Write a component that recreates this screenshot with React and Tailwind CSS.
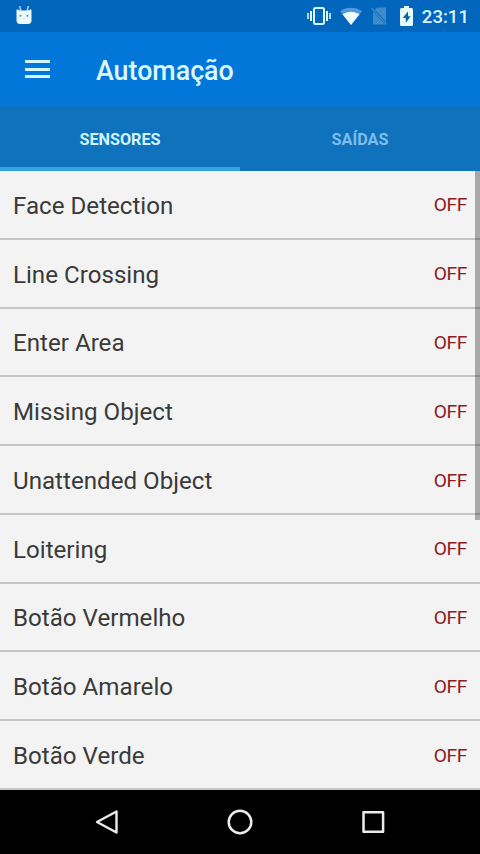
import React, { useState } from 'react';

const sensors = [
    'Face Detection',
    'Line Crossing',
    'Enter Area',
    'Missing Object',
    'Unattended Object',
    'Loitering',
    'Botão Vermelho',
    'Botão Amarelo',
    'Botão Verde',
];

const StatusBar = () => (
    <div className="flex h-8 shrink-0 items-center justify-between bg-[#0366bd] pl-4 pr-[11px]">
        {/* Notificação */}
        <svg className="h-5 w-4" viewBox="0 0 16 20" fill="none">
            <path d="M3.6 0 5 5M12.4 0 11 5" stroke="#b5e4fb" strokeWidth="1.3" />
            <path d="M1 3.8 4 5h8l3-1.2V15a2.5 2.5 0 0 1-2.5 2.5h-9A2.5 2.5 0 0 1 1 15z" fill="#eefcff" stroke="#eefcff" strokeWidth="1" strokeLinejoin="round" />
            <circle cx="4.4" cy="9.7" r="1" fill="#6c8792" />
            <circle cx="11.4" cy="9.7" r="1" fill="#6c8792" />
            <path d="M7 12h2l-1 1z" fill="#a3b9bf" />
        </svg>

        <div className="flex items-center">
            <svg className="h-5 w-6" viewBox="0 0 24 20" fill="none" stroke="#d9f7ff">
                <rect x="7" y="2" width="10" height="16" rx="1.5" strokeWidth="2" />
                <path d="M4 5v10M20 5v10" strokeWidth="2" />
                <path d="M1 7v6M23 7v6" strokeWidth="1.6" />
            </svg>
            <svg className="ml-[9px] h-5 w-[22px]" viewBox="0 0 22 20">
                <path d="M11 19 0 5.2C6.5.6 15.5.6 22 5.2z" fill="#4f9bd9" />
                <path d="M11 19 2.5 8.3c5.5-3.4 11.5-3.4 17 0z" fill="#f0fdff" />
            </svg>
            <svg className="ml-[9px] h-5 w-4" viewBox="0 0 16 20" fill="none">
                <path d="M6 1.5h8a1 1 0 0 1 1 1v13.2L4 3.7zM2 5.5l12 13H3a1 1 0 0 1-1-1z" fill="#3f8acb" />
                <path d="M.5 2 15.5 18.5" stroke="#3f8acb" strokeWidth="1.5" />
            </svg>
            <svg className="ml-[13px] h-5 w-[13px]" viewBox="0 0 13 20">
                <path d="M4 0h5v2h2.5A1.5 1.5 0 0 1 13 3.5v15a1.5 1.5 0 0 1-1.5 1.5h-10A1.5 1.5 0 0 1 0 18.5v-15A1.5 1.5 0 0 1 1.5 2H4z" fill="#e6fbff" />
                <path d="M8 5.5 2.7 12h3.1v5l4.8-6.7H8z" fill="#17609f" />
            </svg>
            <span className="ml-[9px] pt-px text-[18.6px] leading-5 font-medium text-[#d9f5ff]">23:11</span>
        </div>
    </div>
);

const Toolbar = () => (
    <div className="flex h-[74px] shrink-0 items-center bg-[#0376d9] pl-[25px]">
        <button aria-label="Menu" className="flex h-[18px] w-[25px] flex-col justify-between">
            <span className="h-[3px] w-full bg-[#d4f6ff]" />
            <span className="h-[3px] w-full bg-[#d4f6ff]" />
            <span className="h-[3px] w-full bg-[#d4f6ff]" />
        </button>
        <h1 className="ml-[46px] pt-1 text-[26.8px] leading-8 font-medium text-[#dcf8ff]">Automação</h1>
    </div>
);

const NavBar = () => (
    <div className="flex h-16 shrink-0 items-center justify-center gap-[107px] bg-black">
        <svg className="h-[26px] w-[26px]" viewBox="0 0 26 26" fill="none" stroke="#ececec" strokeWidth="2.4" strokeLinejoin="round">
            <path d="M22.5 2.5v21L3 13z" />
        </svg>
        <svg className="h-[26px] w-[26px]" viewBox="0 0 26 26" fill="none" stroke="#ececec" strokeWidth="2.5">
            <circle cx="13" cy="13" r="11.3" />
        </svg>
        <svg className="h-[26px] w-[26px]" viewBox="0 0 26 26" fill="none" stroke="#ececec" strokeWidth="2.5" strokeLinejoin="round">
            <rect x="3.5" y="3.2" width="19.6" height="19.6" />
        </svg>
    </div>
);

const App = () => {
    const [tab, setTab] = useState('sensores');

    return (
        <div className="flex h-[854px] w-[480px] flex-col overflow-hidden bg-[#f3f3f3] font-['Roboto',sans-serif]">
            <StatusBar />
            <Toolbar />

            {/* Abas */}
            <div className="grid h-[65px] shrink-0 grid-cols-2 bg-[#0f72bd] text-[16.2px] font-bold">
                <button
                    onClick={() => setTab('sensores')}
                    className={tab === 'sensores' ? 'border-b-4 border-[#35a3dc] pt-2 text-[#d2f3ff]' : 'border-b-4 border-transparent pt-2 text-[#7fbdeb]'}
                >
                    SENSORES
                </button>
                <button
                    onClick={() => setTab('saidas')}
                    className={tab === 'saidas' ? 'border-b-4 border-[#35a3dc] pt-2 text-[#d2f3ff]' : 'border-b-4 border-transparent pt-2 text-[#7fbdeb]'}
                >
                    SAÍDAS
                </button>
            </div>

            {/* Lista de sensores */}
            <div className="relative flex min-h-0 flex-1 flex-col">
                {sensors.map((name) => (
                    <div key={name} className="flex flex-1 items-center justify-between border-b-2 border-[#c6c6c6] px-[13px] pt-[3px]">
                        <span className="text-[24.15px] text-[#3a3a3a]">{name}</span>
                        <span className="text-[19.2px] tracking-[-0.4px] text-[#8c2020]">OFF</span>
                    </div>
                ))}
                <div className="absolute top-0 right-0 h-[349px] w-[5px] bg-black/30" />
            </div>

            <NavBar />
        </div>
    );
};

export default App;
